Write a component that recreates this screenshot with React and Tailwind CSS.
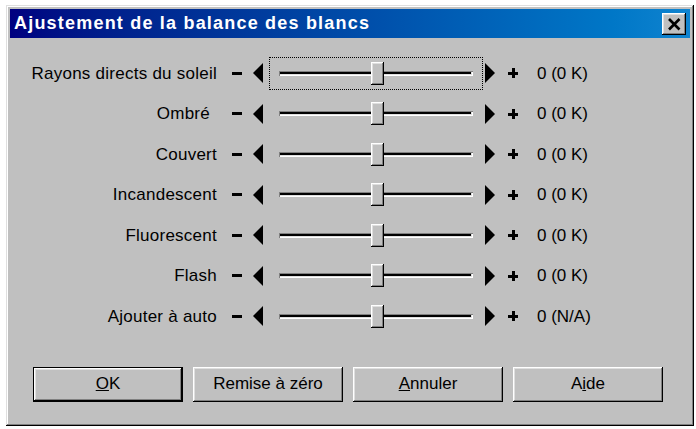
import React from "react";

const rows = [
  { label: "Rayons directs du soleil", value: "0 (0 K)", focus: true },
  { label: "Ombré", value: "0 (0 K)", pad: true },
  { label: "Couvert", value: "0 (0 K)" },
  { label: "Incandescent", value: "0 (0 K)" },
  { label: "Fluorescent", value: "0 (0 K)" },
  { label: "Flash", value: "0 (0 K)" },
  { label: "Ajouter à auto", value: "0 (N/A)" }
];

const raised =
  "shadow-[inset_-1px_-1px_0_#000,inset_1px_1px_0_#fff,inset_-2px_-2px_0_#808080,inset_2px_2px_0_#dfdfdf]";

const SliderRow = ({ label, value, focus, pad }) => (
  <div className="flex items-center h-[40.5px]">
    <div className={`w-[207px] text-right tracking-[0.25px] ${pad ? "pr-[7px]" : ""}`}>{label}</div>
    <div className="ml-[15px] w-[10px] h-[3px] bg-black"></div>
    <svg className="ml-[11px]" width="10" height="20" viewBox="0 0 10 20">
      <polygon points="10,0 0,10 10,20" fill="#000" />
    </svg>
    <div
      className={`ml-[6px] w-[214px] h-[33px] flex items-center px-[9px] ${
        focus ? "border border-dotted border-black" : "border border-transparent"
      }`}
    >
      <div className="relative w-full h-[5px] bg-black shadow-[inset_1px_1px_0_#808080,inset_-1px_-1px_0_#fff,inset_-2px_-2px_0_#dfdfdf]">
        <div className={`absolute left-[92px] top-[-9px] w-[13px] h-[23px] bg-[#c0c0c0] ${raised}`}></div>
      </div>
    </div>
    <svg className="ml-[2px]" width="10" height="20" viewBox="0 0 10 20">
      <polygon points="0,0 10,10 0,20" fill="#000" />
    </svg>
    <div className="ml-[13px] relative w-[10px] h-[10px]">
      <div className="absolute left-0 top-[4px] w-[10px] h-[3px] bg-black"></div>
      <div className="absolute left-[4px] top-0 w-[3px] h-[10px] bg-black"></div>
    </div>
    <div className="ml-[19px]">{value}</div>
  </div>
);

const Button = ({ children, isDefault }) => (
  <button
    className={`w-[150px] h-[35px] bg-[#c0c0c0] text-black ${
      isDefault
        ? "shadow-[inset_0_0_0_1px_#000,inset_-2px_-2px_0_#000,inset_2px_2px_0_#fff,inset_-3px_-3px_0_#808080,inset_3px_3px_0_#dfdfdf]"
        : raised
    }`}
  >
    {children}
  </button>
);

export default function App() {
  return (
    <div
      className="min-h-screen bg-white pt-[5px] pl-[6px] text-[17px] text-black"
      style={{ fontFamily: '"Liberation Sans", Arial, sans-serif' }}
    >
      <div className="w-[688px] h-[421px] bg-[#c0c0c0] p-[4px] flex flex-col shadow-[inset_-1px_-1px_0_#000,inset_1px_1px_0_#dfdfdf,inset_-2px_-2px_0_#808080,inset_2px_2px_0_#fff]">
        {/* Title bar */}
        <div className="h-[29px] flex items-center justify-between pl-[4px] pr-[4px] bg-gradient-to-r from-[#000080] to-[#1084d0]">
          <span className="text-white font-bold text-[18px] tracking-[1.2px]">
            Ajustement de la balance des blancs
          </span>
          <div className={`w-[24px] h-[22px] bg-[#c0c0c0] flex items-center justify-center ${raised}`}>
            <svg width="24" height="22" viewBox="0 0 24 22">
              <line x1="7" y1="6" x2="17.5" y2="16.5" stroke="#000" strokeWidth="2.6" />
              <line x1="17.5" y1="6" x2="7" y2="16.5" stroke="#000" strokeWidth="2.6" />
            </svg>
          </div>
        </div>

        {/* Sliders */}
        <div className="pt-[15px]">
          {rows.map(r => (
            <SliderRow key={r.label} {...r} />
          ))}
        </div>

        {/* Buttons */}
        <div className="flex gap-[10px] pl-[23px] mt-[30px]">
          <Button isDefault>
            <span className="underline">O</span>K
          </Button>
          <Button>Remise à zéro</Button>
          <Button>
            <span className="underline">A</span>nnuler
          </Button>
          <Button>
            A<span className="underline">i</span>de
          </Button>
        </div>
      </div>
    </div>
  );
}
